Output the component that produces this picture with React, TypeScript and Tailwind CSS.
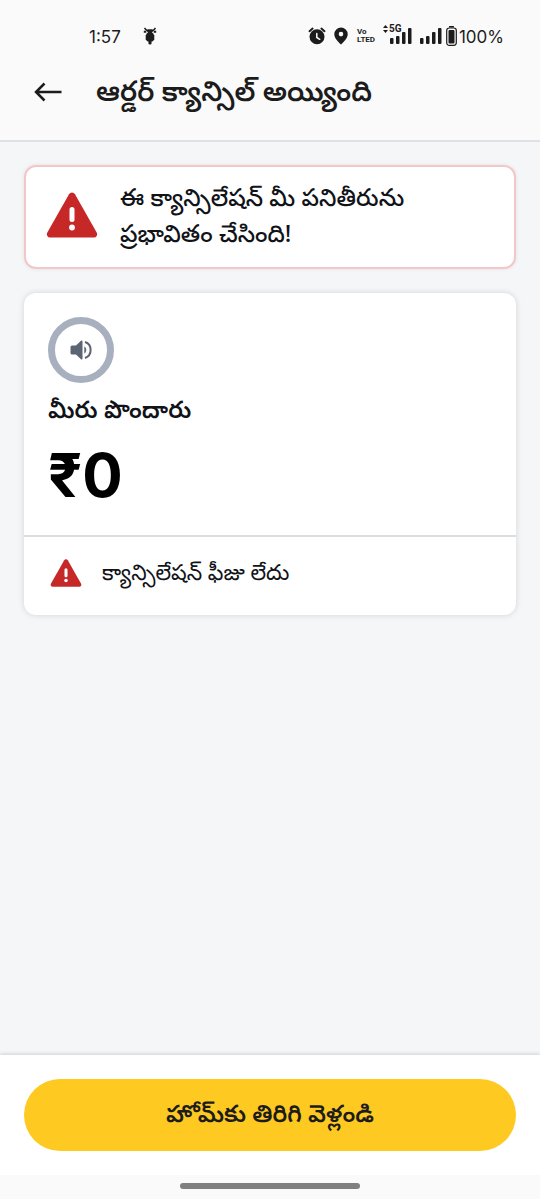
interface IconProps {
  className?: string;
}

function ScooterIcon({ className }: IconProps) {
  return (
    <svg viewBox="0 0 14 18" className={className} fill="currentColor" aria-hidden="true">
      <path d="M5 2.500h4l.8 1.800L9 6H5l-.8-1.700z" />
      <path d="M1.500 1l2 2.300h7l2-2.300" fill="none" stroke="currentColor" strokeWidth="1.500" />
      <path d="M.8 4.800h2.500M10.700 4.800h2.500" stroke="currentColor" strokeWidth="2" />
      <path d="M4 6h6l1.300 2.500v4.300L9.300 14.500H4.700l-2-1.700V8.500z" />
      <rect x="5.500" y="10.500" width="3" height="7" rx="1.300" />
    </svg>
  );
}

function AlarmIcon({ className }: IconProps) {
  return (
    <svg viewBox="0 0 18 18" className={className} fill="none" aria-hidden="true">
      <circle cx="9" cy="9.700" r="7.500" fill="currentColor" />
      <path d="M1.500 4.200L4.600 1.600M16.500 4.200l-3.100-2.600" stroke="currentColor" strokeWidth="2" strokeLinecap="round" />
      <path d="M8.800 6.500v4l2.900 1.800" stroke="#fafafa" strokeWidth="1.500" strokeLinecap="round" />
    </svg>
  );
}

function PinIcon({ className }: IconProps) {
  return (
    <svg viewBox="0 0 14 18" className={className} fill="currentColor" aria-hidden="true">
      <path
        fillRule="evenodd"
        d="M7 .5A6.700 6.700 0 0 0 .3 7.200C.3 11 4 14.500 7 17.500c3-3 6.700-6.500 6.700-10.300A6.700 6.700 0 0 0 7 .5zm0 4.300a2.300 2.300 0 1 1 0 4.600 2.300 2.300 0 0 1 0-4.600z"
      />
    </svg>
  );
}

function SignalIcon({ className }: IconProps) {
  return (
    <svg viewBox="0 0 22 16" className={className} fill="currentColor" aria-hidden="true">
      <rect x="0" y="10" width="3.500" height="6" rx="1" />
      <rect x="6" y="8" width="3.500" height="8" rx="1" />
      <rect x="12" y="4" width="3.500" height="12" rx="1" />
      <rect x="18" y="0" width="3.500" height="16" rx="1" />
    </svg>
  );
}

function DataArrowsIcon({ className }: IconProps) {
  return (
    <svg viewBox="0 0 5 8" className={className} fill="currentColor" aria-hidden="true">
      <path d="M0 3l2.500-3L5 3zM0 5l2.500 3L5 5z" />
    </svg>
  );
}

function BatteryIcon({ className }: IconProps) {
  return (
    <svg viewBox="0 0 11 20" className={className} aria-hidden="true">
      <rect x="3" y="0" width="5" height="1.500" rx=".5" fill="currentColor" />
      <rect x=".7" y="2" width="9.600" height="17.300" rx="2.500" fill="none" stroke="currentColor" strokeWidth="1.200" />
      <rect x="2.500" y="4" width="6" height="13.500" rx="1" fill="currentColor" />
    </svg>
  );
}

function BackIcon({ className }: IconProps) {
  return (
    <svg viewBox="0 0 28 20" className={className} fill="none" aria-hidden="true">
      <path d="M27.500 10H2.500M10.500 1.500L2 10l8.500 8.500" stroke="currentColor" strokeWidth="2.500" />
    </svg>
  );
}

function WarningIcon({ className }: IconProps) {
  return (
    <svg viewBox="0 0 52 46" className={className} aria-hidden="true">
      <path
        d="M23 2.200a3.500 3.500 0 0 1 6 0l21.800 38.500a3.300 3.300 0 0 1-2.900 4.800H4.100a3.300 3.300 0 0 1-2.900-4.800z"
        fill="#c62828"
      />
      <path d="M26 17.500v10" stroke="#fff" strokeWidth="5" strokeLinecap="round" />
      <circle cx="26" cy="35.500" r="2.900" fill="#fff" />
    </svg>
  );
}

function SpeakerIcon({ className }: IconProps) {
  return (
    <svg viewBox="0 0 22 20" className={className} fill="none" aria-hidden="true">
      <path
        d="M2 5.500h4L11 .8c.6-.5 1.500-.2 1.500.7v17c0 .9-.9 1.200-1.500.7l-5-4.700H2a1.500 1.500 0 0 1-1.500-1.500V7A1.500 1.500 0 0 1 2 5.500z"
        fill="#5b6472"
      />
      <path d="M14.300 6.500c2.600 1.200 2.600 5.800 0 7z" fill="#5b6472" />
      <path d="M15 2c7.500 2.500 7.500 13.500 0 16" stroke="#5b6472" strokeWidth="2" />
    </svg>
  );
}

function StatusBar() {
  return (
    <div className="flex h-15 items-center justify-between pt-3 pr-9 pl-[89px] text-[#1c1c1c]">
      <div className="flex items-center gap-[22px]">
        <span className="pt-[2px] font-['Inter',sans-serif] text-[17px] leading-6">1:57</span>
        <ScooterIcon className="h-[18px] w-[14px]" />
      </div>
      <div className="flex items-center">
        <AlarmIcon className="mr-2 size-[18px]" />
        <PinIcon className="mr-[9px] h-[18px] w-[14px]" />
        <div className="mr-2 w-[18px] font-['Liberation_Sans_Narrow','Roboto',sans-serif] text-[8px] leading-2 font-bold">
          <div>Vo</div>
          <div>LTED</div>
        </div>
        <div className="relative mr-2 w-[29px]">
          <SignalIcon className="ml-auto h-4 w-[22px]" />
          <div className="absolute -top-1 left-0 flex items-center gap-px bg-[#fafafa] font-['Liberation_Sans_Narrow','Roboto',sans-serif] text-[10px] leading-[10px] font-bold">
            <DataArrowsIcon className="h-2 w-[5px]" />
            5G
          </div>
        </div>
        <SignalIcon className="mr-1 h-4 w-[22px]" />
        <BatteryIcon className="mr-[2px] h-5 w-[11px]" />
        <span className="pt-[2px] font-['Inter',sans-serif] text-[17px] leading-6">100%</span>
      </div>
    </div>
  );
}

export default function App() {
  return (
    <div className="flex min-h-screen flex-col bg-[#f5f6f8] font-['Noto_Sans','Noto_Sans_Telugu',sans-serif] text-[#111318]">
      <header className="border-b-2 border-[#dfe1e4] bg-[#fafafa]">
        <StatusBar />
        <div className="flex h-20 items-start gap-[34px] px-[34px] pt-3">
          <button type="button" aria-label="వెనుకకు" className="flex h-10 items-center text-[#1c1c1c]">
            <BackIcon className="h-5 w-7" />
          </button>
          <h1 className="text-[28px] leading-9 font-semibold text-[#1c1c1c]">ఆర్డర్ క్యాన్సిల్ అయ్యింది</h1>
        </div>
      </header>

      <main className="flex flex-1 flex-col gap-6 px-6 pt-[23px]">
        <section className="flex items-center gap-[22px] rounded-xl border-2 border-[#f5c6c8] bg-white px-5 pt-3 pb-4 shadow-[0_0_4px_rgba(0,0,0,0.08)]">
          <WarningIcon className="h-[46px] w-[52px] shrink-0" />
          <p className="text-[24px] leading-9 font-medium">ఈ క్యాన్సిలేషన్ మీ పనితీరును ప్రభావితం చేసింది!</p>
        </section>

        <section className="rounded-xl bg-white shadow-[0_0_6px_rgba(0,0,0,0.14)]">
          <div className="px-6 pt-6 pb-6">
            <button
              type="button"
              aria-label="వినండి"
              className="flex size-[66px] items-center justify-center rounded-full border-[7px] border-[#a8b0bf] bg-white"
            >
              <SpeakerIcon className="h-5 w-[22px]" />
            </button>
            <p className="mt-2 text-[24px] leading-9 font-semibold">మీరు పొందారు</p>
            <p className="mt-3 font-['Inter',sans-serif] text-[60px] leading-[72px] font-bold text-black">₹0</p>
          </div>
          <div className="flex items-center gap-5 border-t-2 border-[#dcdde0] px-[26px] pt-4 pb-[26px]">
            <WarningIcon className="mt-1 h-7 w-8 shrink-0" />
            <p className="text-[22px] leading-9">క్యాన్సిలేషన్ ఫీజు లేదు</p>
          </div>
        </section>
      </main>

      <footer className="bg-white shadow-[0_-1px_4px_rgba(0,0,0,0.16)]">
        <div className="p-6">
          <button
            type="button"
            className="h-[72px] w-full rounded-full bg-[#fec920] pb-1 text-[24px] leading-9 font-semibold text-[#1c1c1c]"
          >
            హోమ్‌కు తిరిగి వెళ్లండి
          </button>
        </div>
        <div className="flex h-6 justify-center bg-[#fafafa] pt-2">
          <div className="h-[6px] w-[180px] rounded-full bg-[#808080]" />
        </div>
      </footer>
    </div>
  );
}
